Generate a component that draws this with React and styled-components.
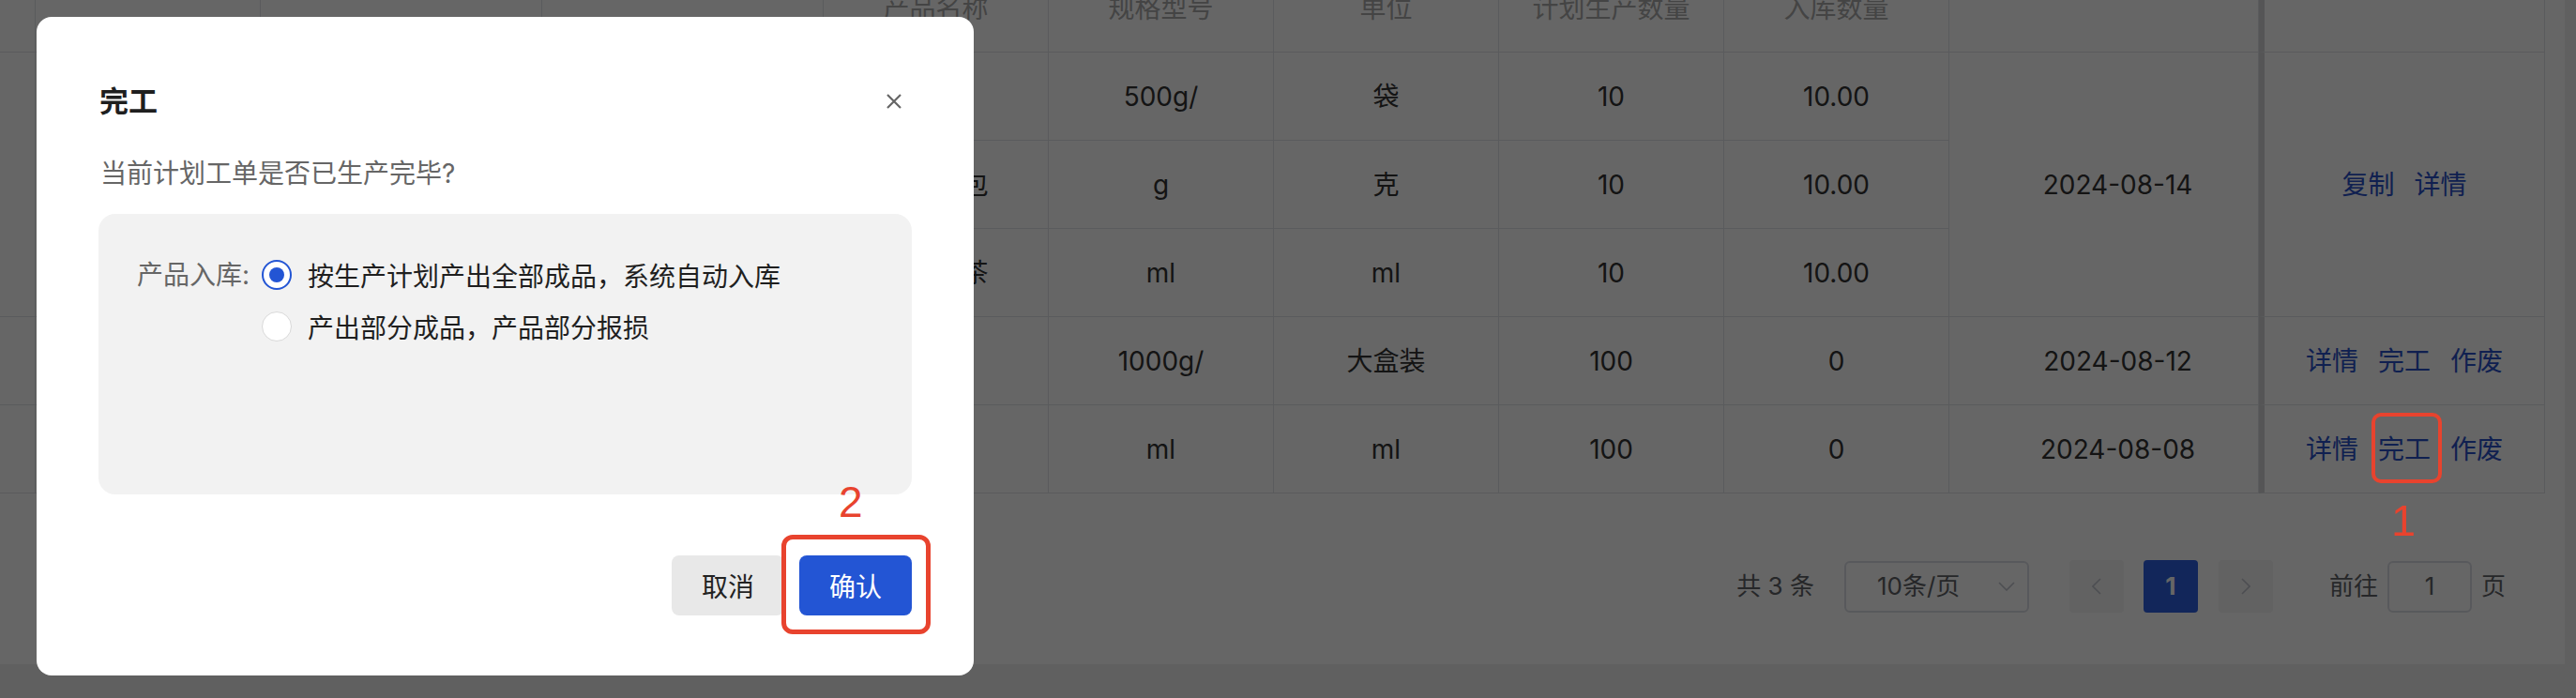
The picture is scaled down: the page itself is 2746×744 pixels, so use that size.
import React from "react";
import styled, { createGlobalStyle } from "styled-components";

const GlobalStyle = createGlobalStyle`
  html, body { margin: 0; padding: 0; }
  body {
    font-family: "Inter", "Noto Sans CJK SC", "Noto Sans", sans-serif;
    width: 2746px;
    height: 744px;
    overflow: hidden;
  }
`;

const RED = "#e8432e";

const Page = styled.div`
  width: 2746px;
  height: 744px;
  overflow: hidden;
  background: #efefef;
  box-sizing: border-box;
  padding-right: 12px;
`;

const Card = styled.div`
  background: #fff;
  margin-top: -132px;
  padding-right: 21px;
`;

const Table = styled.table`
  border-collapse: separate;
  border-spacing: 0;
  table-layout: fixed;
  width: 2713px;
  font-size: 28px;
  color: #333;
`;

const cellBase = `
  box-sizing: border-box;
  height: 94px;
  padding: 0;
  border-right: 1px solid #e2e4e8;
  border-bottom: 1px solid #e2e4e8;
  text-align: center;
  vertical-align: middle;
  line-height: 40px;
  white-space: nowrap;
`;

const Th = styled.th`
  ${cellBase}
  overflow: hidden;
  font-weight: 400;
  color: #aaaaaa;
  ${(p) => p.$fixed && "border-left: 6px solid #d4d5d8;"}
`;

const Td = styled.td`
  ${cellBase}
  color: #333;
  ${(p) => p.$padLeft && `padding-left: ${p.$padLeft}px;`}
  ${(p) => p.$fixed && "border-left: 6px solid #d4d5d8;"}
`;

const Links = styled.div`
  display: flex;
  justify-content: center;
  align-items: center;
  gap: 21px;
`;

const Link = styled.span`
  color: #2a50c8;
  display: inline-block;
  line-height: 40px;
`;

const MarkedLink = styled(Link)`
  position: relative;
  &::before {
    content: "";
    position: absolute;
    left: -7px;
    right: -12px;
    top: -19px;
    bottom: -16px;
    border: 4px solid ${RED};
    border-radius: 10px;
    z-index: 30;
  }
`;

const StepNumber = styled.span`
  position: absolute;
  z-index: 30;
  left: ${(p) => p.$left}px;
  top: ${(p) => p.$top}px;
  font-family: "Liberation Sans", Arial, sans-serif;
  font-size: ${(p) => p.$size}px;
  line-height: ${(p) => p.$size}px;
  color: ${RED};
  font-weight: 400;
`;

const Pager = styled.div`
  display: flex;
  justify-content: flex-end;
  align-items: center;
  padding: 71px 42px 55px 0;
  font-size: 26px;
  color: #606266;
  line-height: 36px;
`;

const PagerText = styled.span`
  margin-left: ${(p) => p.$ml || 0}px;
  white-space: pre;
`;

const SizeSelect = styled.div`
  margin-left: ${(p) => p.$ml}px;
  width: 197px;
  height: 55px;
  box-sizing: border-box;
  border: 2px solid #dcdfe6;
  border-radius: 6px;
  display: flex;
  align-items: center;
  padding: 0 13px 0 33px;
  justify-content: space-between;
`;

const PageBtn = styled.div`
  margin-left: ${(p) => p.$ml}px;
  width: 58px;
  height: 56px;
  border-radius: 4px;
  background: ${(p) => (p.$active ? "#2f5fe0" : "#f4f4f5")};
  color: ${(p) => (p.$active ? "#fff" : "#c0c4cc")};
  display: flex;
  align-items: center;
  justify-content: center;
  font-weight: ${(p) => (p.$active ? 700 : 400)};
`;

const JumpInput = styled.div`
  margin-left: ${(p) => p.$ml}px;
  width: 90px;
  height: 55px;
  box-sizing: border-box;
  border: 2px solid #dcdfe6;
  border-radius: 6px;
  display: flex;
  align-items: center;
  justify-content: center;
`;

/* ---------- Modal ---------- */

const Overlay = styled.div`
  position: fixed;
  inset: 0;
  background: rgba(0, 0, 0, 0.6);
  z-index: 10;
  box-sizing: border-box;
  padding: 18px 0 0 39px;
`;

const Dialog = styled.div`
  width: 999px;
  height: 702px;
  box-sizing: border-box;
  background: #fff;
  border-radius: 16px;
  padding: 0 66px 64px 66px;
  display: flex;
  flex-direction: column;
`;

const DialogHeader = styled.div`
  padding-top: 70px;
  height: 40px;
  display: flex;
  align-items: center;
  justify-content: space-between;
`;

const Title = styled.div`
  font-size: 31px;
  font-weight: 700;
  color: #1f1f1f;
  line-height: 40px;
  padding-left: 1px;
`;

const CloseBtn = styled.div`
  width: 38px;
  height: 38px;
  display: flex;
  align-items: center;
  justify-content: center;
`;

const Question = styled.div`
  margin-top: 37px;
  font-size: 28px;
  line-height: 40px;
  color: #666;
  padding-left: 2px;
`;

const FormBox = styled.div`
  margin-top: 23px;
  height: 299px;
  box-sizing: border-box;
  background: #f2f2f2;
  border-radius: 18px;
  padding: 45px 0 0 41px;
  display: flex;
  align-items: flex-start;
`;

const FieldLabel = styled.div`
  font-size: 28px;
  line-height: 40px;
  color: #666;
  margin-right: 13px;
`;

const RadioList = styled.div`
  display: flex;
  flex-direction: column;
  gap: 15px;
`;

const RadioRow = styled.div`
  display: flex;
  align-items: center;
  gap: 17px;
  height: 40px;
  font-size: 28px;
  color: #1f1f1f;
`;

const RadioCircle = styled.span`
  width: 32px;
  height: 32px;
  box-sizing: border-box;
  border-radius: 50%;
  background: #fff;
  border: ${(p) => (p.$checked ? "2.5px solid #2355d4" : "1.5px solid #d9d9d9")};
  display: flex;
  align-items: center;
  justify-content: center;
  &::after {
    content: "";
    width: 16px;
    height: 16px;
    border-radius: 50%;
    background: ${(p) => (p.$checked ? "#2355d4" : "transparent")};
  }
`;

const Footer = styled.div`
  margin-top: auto;
  display: flex;
  justify-content: flex-end;
  gap: 16px;
`;

const Button = styled.div`
  position: relative;
  width: 120px;
  height: 64px;
  border-radius: 8px;
  display: flex;
  align-items: center;
  justify-content: center;
  font-size: 28px;
  background: ${(p) => (p.$primary ? "#2355d4" : "#e8e8e8")};
  color: ${(p) => (p.$primary ? "#fff" : "#222")};
`;

const HighlightBox = styled.span`
  position: absolute;
  left: -19px;
  right: -20px;
  top: -22px;
  bottom: -20px;
  border: 5px solid ${RED};
  border-radius: 12px;
  pointer-events: none;
`;

const Chevron = ({ dir, color = "#c0c4cc", w = 10, h = 18 }) => {
  const pts =
    dir === "left"
      ? `${w - 1},1 1,${h / 2} ${w - 1},${h - 1}`
      : dir === "right"
      ? `1,1 ${w - 1},${h / 2} 1,${h - 1}`
      : `1,1 ${w / 2},${h - 1} ${w - 1},1`;
  return (
    <svg width={w} height={h} viewBox={`0 0 ${w} ${h}`}>
      <polyline points={pts} fill="none" stroke={color} strokeWidth="1.6" />
    </svg>
  );
};

const rows = [
  { name: "大米", spec: "500g/", unit: "袋", plan: "10", stored: "10.00" },
  { name: "奶油面包", spec: "g", unit: "克", plan: "10", stored: "10.00" },
  { name: "珍珠奶茶", spec: "ml", unit: "ml", plan: "10", stored: "10.00" },
];

export default function App() {
  return (
    <>
      <GlobalStyle />
      <Page>
        <Card>
          <Table>
            <colgroup>
              <col style={{ width: 38 }} />
              <col style={{ width: 240 }} />
              <col style={{ width: 300 }} />
              <col style={{ width: 300 }} />
              <col style={{ width: 240 }} />
              <col style={{ width: 240 }} />
              <col style={{ width: 240 }} />
              <col style={{ width: 240 }} />
              <col style={{ width: 240 }} />
              <col style={{ width: 330 }} />
              <col style={{ width: 305 }} />
            </colgroup>
            <thead>
              <tr>
                <Th rowSpan={2}></Th>
                <Th rowSpan={2}>计划单号</Th>
                <Th rowSpan={2}>生产车间</Th>
                <Th rowSpan={2}>计划日期</Th>
                <Th colSpan={5}>产品信息</Th>
                <Th rowSpan={2}>计划完成日期</Th>
                <Th rowSpan={2} $fixed>
                  操作
                </Th>
              </tr>
              <tr>
                <Th>产品名称</Th>
                <Th>规格型号</Th>
                <Th>单位</Th>
                <Th>计划生产数量</Th>
                <Th>入库数量</Th>
              </tr>
            </thead>
            <tbody>
              {rows.map((r, i) => (
                <tr key={i}>
                  {i === 0 && (
                    <>
                      <Td rowSpan={3}></Td>
                      <Td rowSpan={3}></Td>
                      <Td rowSpan={3}></Td>
                      <Td rowSpan={3}></Td>
                    </>
                  )}
                  <Td>{r.name}</Td>
                  <Td>{r.spec}</Td>
                  <Td>{r.unit}</Td>
                  <Td>{r.plan}</Td>
                  <Td>{r.stored}</Td>
                  {i === 0 && (
                    <>
                      <Td rowSpan={3} $padLeft={30}>
                        2024-08-14
                      </Td>
                      <Td rowSpan={3} $fixed>
                        <Links>
                          <Link>复制</Link>
                          <Link>详情</Link>
                        </Links>
                      </Td>
                    </>
                  )}
                </tr>
              ))}
              <tr>
                <Td></Td>
                <Td></Td>
                <Td></Td>
                <Td></Td>
                <Td></Td>
                <Td>1000g/</Td>
                <Td>大盒装</Td>
                <Td>100</Td>
                <Td>0</Td>
                <Td $padLeft={30}>2024-08-12</Td>
                <Td $fixed>
                  <Links>
                    <Link>详情</Link>
                    <Link>完工</Link>
                    <Link>作废</Link>
                  </Links>
                </Td>
              </tr>
              <tr>
                <Td></Td>
                <Td></Td>
                <Td></Td>
                <Td></Td>
                <Td></Td>
                <Td>ml</Td>
                <Td>ml</Td>
                <Td>100</Td>
                <Td>0</Td>
                <Td $padLeft={30}>2024-08-08</Td>
                <Td $fixed>
                  <Links>
                    <Link>详情</Link>
                    <MarkedLink>
                      完工
                      <StepNumber $left={14} $top={72} $size={47}>
                        1
                      </StepNumber>
                    </MarkedLink>
                    <Link>作废</Link>
                  </Links>
                </Td>
              </tr>
            </tbody>
          </Table>
          <Pager>
            <PagerText>共 3 条</PagerText>
            <SizeSelect $ml={32}>
              <span>10条/页</span>
              <Chevron dir="down" w={18} h={10} color="#c0c4cc" />
            </SizeSelect>
            <PageBtn $ml={43}>
              <Chevron dir="left" />
            </PageBtn>
            <PageBtn $ml={21} $active>
              1
            </PageBtn>
            <PageBtn $ml={22}>
              <Chevron dir="right" />
            </PageBtn>
            <PagerText $ml={60}>前往</PagerText>
            <JumpInput $ml={10}>1</JumpInput>
            <PagerText $ml={10}>页</PagerText>
          </Pager>
        </Card>
      </Page>

      <Overlay>
        <Dialog>
          <DialogHeader>
            <Title>完工</Title>
            <CloseBtn>
              <svg width="18" height="18" viewBox="0 0 18 18">
                <path d="M2 2 L16 16 M16 2 L2 16" stroke="#666" strokeWidth="2.2" fill="none" />
              </svg>
            </CloseBtn>
          </DialogHeader>
          <Question>当前计划工单是否已生产完毕?</Question>
          <FormBox>
            <FieldLabel>产品入库:</FieldLabel>
            <RadioList>
              <RadioRow>
                <RadioCircle $checked />
                <span>按生产计划产出全部成品，系统自动入库</span>
              </RadioRow>
              <RadioRow>
                <RadioCircle />
                <span>产出部分成品，产品部分报损</span>
              </RadioRow>
            </RadioList>
          </FormBox>
          <Footer>
            <Button>取消</Button>
            <Button $primary>
              确认
              <HighlightBox />
              <StepNumber $left={42} $top={-80} $size={46}>
                2
              </StepNumber>
            </Button>
          </Footer>
        </Dialog>
      </Overlay>
    </>
  );
}
